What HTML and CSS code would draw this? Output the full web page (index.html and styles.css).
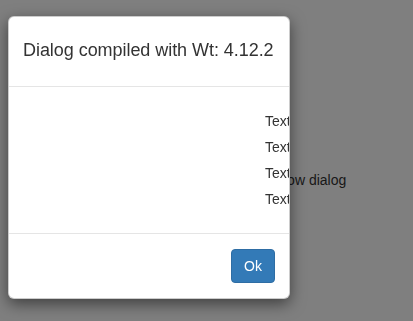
FILE: index.html
```html
<!DOCTYPE html>
<html>
<head>
<meta charset="utf-8">
<link rel="stylesheet" href="styles.css">
</head>
<body>
<div class="page">
  <span class="show-link">Show dialog</span>
</div>
<div class="backdrop"></div>
<div class="dialog">
  <div class="dialog-header">
    <h4 class="dialog-title">Dialog compiled with Wt: 4.12.2</h4>
  </div>
  <div class="dialog-body">
    <div class="item">Text</div>
    <div class="item">Text</div>
    <div class="item">Text</div>
    <div class="item">Text</div>
  </div>
  <div class="dialog-footer">
    <button class="btn-ok">Ok</button>
  </div>
</div>
</body>
</html>
```
FILE: styles.css
```css
html, body {
  margin: 0;
  padding: 0;
  height: 100%;
  background: #ffffff;
  font-family: "Liberation Sans", Arial, sans-serif;
  font-size: 14px;
  line-height: 20px;
  color: #333333;
}
.page {
  padding: 170px 0 0 270px;
}
.show-link {
  color: #333333;
}
.backdrop {
  position: fixed;
  inset: 0;
  background: rgba(0, 0, 0, 0.5);
}
.dialog {
  position: absolute;
  left: 8px;
  top: 16px;
  width: 282px;
  height: 283px;
  box-sizing: border-box;
  background: #ffffff;
  border: 1px solid rgba(0, 0, 0, 0.2);
  border-radius: 6px;
  box-shadow: 0 5px 15px rgba(0, 0, 0, 0.5);
  overflow: hidden;
  display: flex;
  flex-direction: column;
}
.dialog-header {
  padding: 14px 14px 16px;
  border-bottom: 1px solid #e5e5e5;
}
.dialog-title {
  margin: 0;
  font-size: 18px;
  font-weight: normal;
  line-height: 39px;
  letter-spacing: -0.05px;
  color: #333333;
  white-space: nowrap;
}
.dialog-body {
  height: 146px;
  box-sizing: border-box;
  padding: 24px 0 0 256px;
  display: flex;
  flex-direction: column;
  gap: 6px;
}
.item {
  white-space: nowrap;
}
.dialog-footer {
  border-top: 1px solid #e5e5e5;
  padding: 15px 14px;
  display: flex;
  justify-content: flex-end;
}
.btn-ok {
  font-family: "Liberation Sans", Arial, sans-serif;
  font-size: 14px;
  line-height: 20px;
  padding: 6px 12px;
  color: #ffffff;
  background: #337ab7;
  border: 1px solid #2e6da4;
  border-radius: 4px;
}
```
